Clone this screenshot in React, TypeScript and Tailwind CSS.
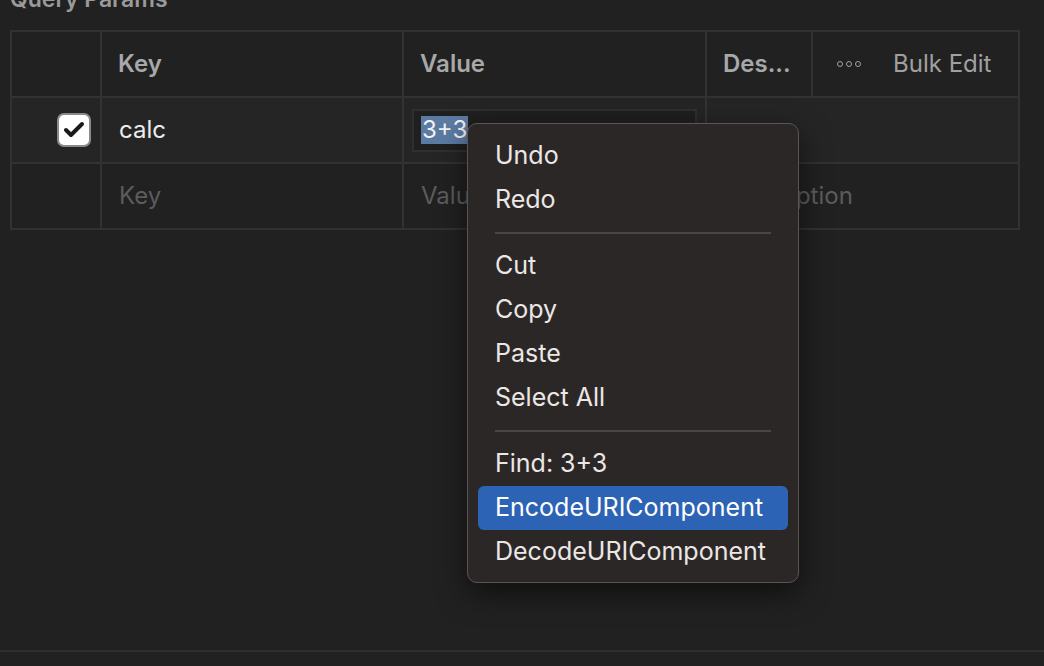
import { Check } from "lucide-react";

const menuItems: (string | null)[] = [
  "Undo",
  "Redo",
  null,
  "Cut",
  "Copy",
  "Paste",
  "Select All",
  null,
  "Find: 3+3",
  "EncodeURIComponent",
  "DecodeURIComponent",
];

const ContextMenu = () => {
  return (
    <div className="absolute left-[467px] top-[123px] w-[332px] rounded-[10px] border border-[#5a5553] bg-[#2c2727] px-[10px] pt-[10px] pb-[8px] shadow-[0_10px_30px_rgba(0,0,0,0.55)]">
      {menuItems.map((item, i) =>
        item === null ? (
          <div key={i} className="flex h-[22px] items-center px-[17px]">
            <div className="h-[2px] w-full bg-[#4b4646]" />
          </div>
        ) : (
          <div
            key={i}
            className={
              "flex h-[44px] items-center rounded-[6px] px-[17px] text-[25px] text-[#ebe7e5] " +
              (item === "EncodeURIComponent" ? "bg-[#2d63b5] text-white" : "")
            }
          >
            {item}
          </div>
        )
      )}
    </div>
  );
};

export default function App() {
  return (
    <div
      className="relative h-[666px] w-[1044px] overflow-hidden bg-[#212121] px-[10px]"
      style={{ fontFamily: "Inter, 'Noto Sans', sans-serif" }}
    >
      <div className="-mt-[17px] h-[32px] text-[23px] font-semibold leading-[32px] text-[#9a9a9a]">
        Query Params
      </div>

      <div className="mt-[15px] grid w-[1010px] grid-cols-[88px_300px_301px_104px_205px] gap-[2px] bg-[#323232] p-[2px] text-[24px]">
        {/* header */}
        <div className="h-[64px] bg-[#212121]" />
        <div className="flex items-center bg-[#212121] px-[16px] font-semibold text-[#a8a8a8]">Key</div>
        <div className="flex items-center bg-[#212121] px-[16px] font-semibold text-[#a8a8a8]">Value</div>
        <div className="flex items-center bg-[#212121] px-[16px] font-semibold text-[#a8a8a8]">Des...</div>
        <div className="flex items-center gap-[32px] bg-[#212121] pl-[24px] text-[#a0a0a0]">
          <span className="flex gap-[3px]">
            <span className="h-[6px] w-[6px] rounded-full border-[1.5px] border-[#a0a0a0]" />
            <span className="h-[6px] w-[6px] rounded-full border-[1.5px] border-[#a0a0a0]" />
            <span className="h-[6px] w-[6px] rounded-full border-[1.5px] border-[#a0a0a0]" />
          </span>
          <span>Bulk Edit</span>
        </div>

        {/* row 1 */}
        <div className="flex h-[64px] items-center justify-end bg-[#252525] pr-[9px]">
          <div className="flex h-[34px] w-[34px] items-center justify-center rounded-[7px] border-2 border-[#8a8a8a] bg-white">
            <Check size={24} strokeWidth={4} className="text-[#1a1a1a]" />
          </div>
        </div>
        <div className="flex items-center bg-[#252525] px-[17px] text-[#ececec]">calc</div>
        <div className="flex items-center bg-[#252525] px-[8px]">
          <div className="flex h-[43px] w-full items-center border-2 border-[#2f2f2f] bg-[#1f1f1f] px-[7px]">
            <span className="bg-[#5b7ba3] px-[1px] leading-[28px] text-[#f2f2f2]">3+3</span>
          </div>
        </div>
        <div className="col-span-2 bg-[#252525]" />

        {/* row 2 */}
        <div className="h-[64px] bg-[#212121]" />
        <div className="flex items-center bg-[#212121] px-[17px] text-[#5c5c5c]">Key</div>
        <div className="flex items-center bg-[#212121] px-[17px] text-[#5c5c5c]">Value</div>
        <div className="col-span-2 flex items-center bg-[#212121] px-[16px] text-[#5c5c5c]">Description</div>
      </div>

      <div className="absolute bottom-[14px] left-0 h-[2px] w-full bg-[#2f2f2f]" />

      <ContextMenu />
    </div>
  );
}
